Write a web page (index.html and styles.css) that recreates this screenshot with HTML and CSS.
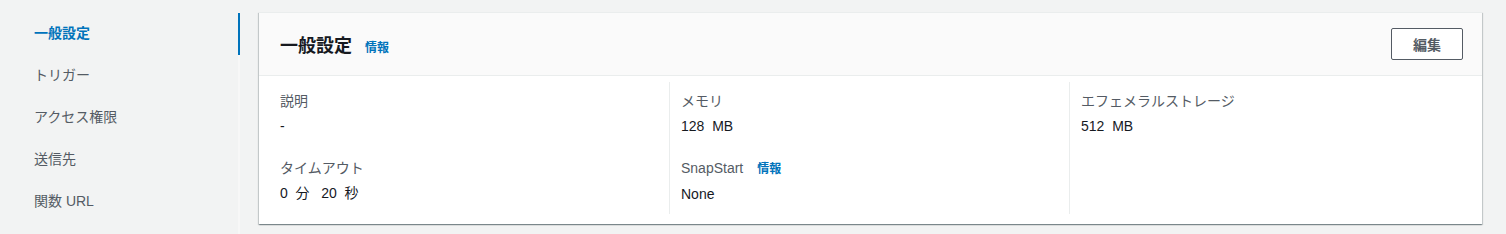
FILE: index.html
```html
<!DOCTYPE html>
<html lang="ja">
<head>
    <meta charset="UTF-8">
    <meta name="viewport" content="width=device-width, initial-scale=1.0">
    <title>一般設定</title>
    <link rel="stylesheet" href="styles.css">
</head>
<body>
    <div class="layout">
        <!-- 左側ナビ -->
        <ul class="side-nav">
            <li class="nav-item active">一般設定</li>
            <li class="nav-item">トリガー</li>
            <li class="nav-item">アクセス権限</li>
            <li class="nav-item">送信先</li>
            <li class="nav-item">関数 URL</li>
        </ul>

        <div class="panel">
            <div class="panel-header">
                <h2 class="panel-title">一般設定 <a class="info-link">情報</a></h2>
                <button class="btn-edit">編集</button>
            </div>

            <div class="panel-body">
                <div class="column">
                    <div class="field">
                        <div class="field-label">説明</div>
                        <div class="field-value">-</div>
                    </div>
                    <div class="field">
                        <div class="field-label">タイムアウト</div>
                        <div class="field-value">0&nbsp; 分 &nbsp; 20&nbsp; 秒</div>
                    </div>
                </div>
                <div class="column">
                    <div class="field">
                        <div class="field-label">メモリ</div>
                        <div class="field-value">128&nbsp; MB</div>
                    </div>
                    <div class="field">
                        <div class="field-label">SnapStart <a class="info-link">情報</a></div>
                        <div class="field-value">None</div>
                    </div>
                </div>
                <div class="column">
                    <div class="field">
                        <div class="field-label">エフェメラルストレージ</div>
                        <div class="field-value">512&nbsp; MB</div>
                    </div>
                </div>
            </div>
        </div>
    </div>
</body>
</html>
```

FILE: styles.css
```css
* {
    box-sizing: border-box;
}

body {
    margin: 0;
    background-color: #f2f3f3;
    font-family: "Liberation Sans", "Noto Sans CJK JP", sans-serif;
    font-size: 14px;
    color: #16191f;
}

.layout {
    display: flex;
    align-items: flex-start;
    padding: 12px 24px 0 0;
    height: 234px;
}

/* 左側ナビ */
.side-nav {
    list-style: none;
    margin: -12px 0 0 0;
    padding: 12px 0 0 0;
    width: 240px;
    height: 234px;
    flex-shrink: 0;
    position: relative;
}

.side-nav::after {
    content: "";
    position: absolute;
    top: 12px;
    bottom: 0;
    right: 0;
    width: 2px;
    background: #f7f7f7;
}

.nav-item {
    height: 42px;
    line-height: 42px;
    padding-left: 34px;
    color: #545b64;
    position: relative;
}

.nav-item.active {
    color: #0073bb;
    font-weight: bold;
}

.nav-item.active::after {
    content: "";
    position: absolute;
    top: 1px;
    right: 0;
    width: 2px;
    height: 42px;
    background: #0073bb;
    z-index: 1;
}

/* パネル */
.panel {
    flex: 1;
    margin-left: 19px;
    background: white;
    border-top: 1px solid #eaeded;
    box-shadow: 0 1px 1px 0 rgba(0,28,36,0.3), 1px 1px 1px 0 rgba(0,28,36,0.15), -1px 1px 1px 0 rgba(0,28,36,0.15);
}

.panel-header {
    display: flex;
    justify-content: space-between;
    align-items: center;
    height: 63px;
    padding: 0 19px 0 21px;
    background: #fafafa;
    border-bottom: 1px solid #eaeded;
}

.panel-title {
    margin: 0;
    font-size: 18px;
    font-weight: bold;
    color: #16191f;
}

.info-link {
    margin-left: 8px;
    font-size: 12px;
    font-weight: bold;
    color: #0073bb;
}

.btn-edit {
    width: 72px;
    height: 32px;
    background: white;
    border: 1px solid #545b64;
    border-radius: 2px;
    font-family: inherit;
    font-size: 14px;
    font-weight: bold;
    color: #545b64;
    margin-top: -1px;
}

.panel-body {
    display: grid;
    grid-template-columns: 389px 400px 1fr;
    padding: 6px 20px 10px 21px;
}

.column {
    height: 132px;
    padding-top: 8px;
}

.column + .column {
    border-left: 1px solid #eaeded;
    padding-left: 11px;
}

.field {
    margin-bottom: 20px;
}

.field:last-child {
    margin-bottom: 0;
}

.field-label {
    line-height: 22px;
    color: #545b64;
    margin-bottom: 3px;
}

.field-label .info-link {
    margin-left: 10px;
}

.field-value {
    line-height: 22px;
    color: #16191f;
}
```
